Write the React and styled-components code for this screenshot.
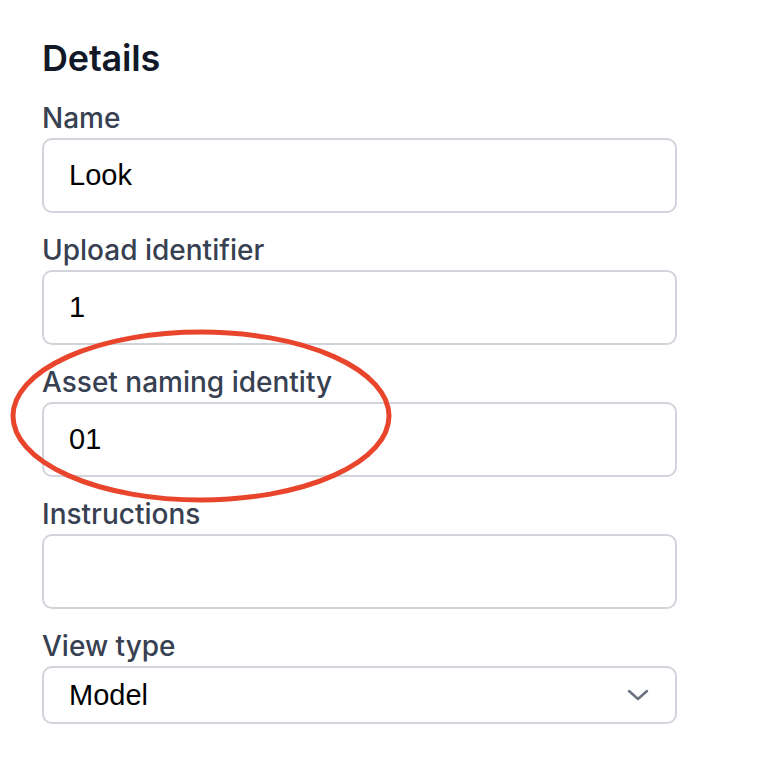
import React from 'react'
import styled, {createGlobalStyle} from 'styled-components'

const GlobalStyle = createGlobalStyle`
  html, body {
    margin: 0;
    padding: 0;
    background: #ffffff;
  }
  body {
    font-family: Inter, "Noto Sans", sans-serif;
  }
`

const fields = [
  {label: 'Name', value: 'Look'},
  {label: 'Upload identifier', value: '1'},
  {label: 'Asset naming identity', value: '01'},
  {label: 'Instructions', value: ''},
]

function App() {
  return (
    <Page>
      <GlobalStyle />
      <Panel>
        <Heading>Details</Heading>
        <Form>
          {fields.map((f) => (
            <Field key={f.label}>
              <Label>{f.label}</Label>
              <Input type="text" defaultValue={f.value} />
            </Field>
          ))}
          <Field>
            <Label>View type</Label>
            <SelectBox>
              <span>Model</span>
              <Chevron width="22" height="12" viewBox="0 0 22 12">
                <path d="M2 2l9 8 9-8" />
              </Chevron>
            </SelectBox>
          </Field>
        </Form>
      </Panel>
      <Annotation width="384" height="176" viewBox="0 0 384 176">
        <ellipse cx="191" cy="87" rx="188" ry="84" />
      </Annotation>
    </Page>
  )
}

export default App

const Page = styled.div`
  position: relative;
  width: 760px;
  height: 776px;
  overflow: hidden;
`

const Panel = styled.div`
  padding: 36px 0 0 42px;
  width: 635px;
`

const Heading = styled.h2`
  margin: 0;
  font-size: 36px;
  line-height: 44px;
  font-weight: 600;
  color: #111827;
  letter-spacing: -0.2px;
`

const Form = styled.div`
  display: flex;
  flex-direction: column;
  gap: 20px;
  margin-top: 21px;
`

const Field = styled.div`
  display: flex;
  flex-direction: column;
`

const Label = styled.label`
  font-size: 28px;
  line-height: 34px;
  font-weight: 500;
  color: #374151;
  margin-bottom: 3px;
`

const Input = styled.input`
  box-sizing: border-box;
  width: 100%;
  height: 75px;
  border: 2px solid #d1d5db;
  border-radius: 10px;
  padding: 0 25px;
  font-family: "Liberation Sans", Arial, sans-serif;
  font-size: 29px;
  color: #000;
  background: #fff;
  outline: none;
`

const SelectBox = styled.div`
  box-sizing: border-box;
  width: 100%;
  height: 58px;
  border: 2px solid #d1d5db;
  border-radius: 10px;
  padding: 0 26px 0 25px;
  display: flex;
  align-items: center;
  justify-content: space-between;
  font-family: "Liberation Sans", Arial, sans-serif;
  font-size: 29px;
  color: #000;
`

const Chevron = styled.svg`
  fill: none;
  stroke: #6b7280;
  stroke-width: 2.5;
  stroke-linecap: round;
  stroke-linejoin: round;
`

const Annotation = styled.svg`
  position: absolute;
  left: 10px;
  top: 329px;
  pointer-events: none;
  fill: none;
  stroke: #e8452c;
  stroke-width: 5;
`
